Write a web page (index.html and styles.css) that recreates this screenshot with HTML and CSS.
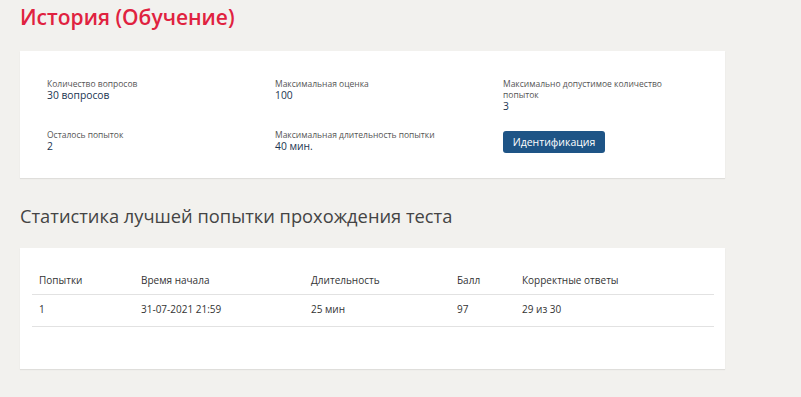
FILE: index.html
```html
<!DOCTYPE html>
<html>

<head>
    <link rel="stylesheet" href="styles.css">
</head>

<body>

    <div class="page">
        <h1 class="page-title">История (Обучение)</h1>

        <div class="card info-card">
            <div class="info-grid">
                <div class="info-item">
                    <div class="info-label">Количество вопросов</div>
                    <div class="info-value">30 вопросов</div>
                </div>
                <div class="info-item">
                    <div class="info-label">Максимальная оценка</div>
                    <div class="info-value">100</div>
                </div>
                <div class="info-item">
                    <div class="info-label">Максимально допустимое количество попыток</div>
                    <div class="info-value">3</div>
                </div>
                <div class="info-item">
                    <div class="info-label">Осталось попыток</div>
                    <div class="info-value">2</div>
                </div>
                <div class="info-item">
                    <div class="info-label">Максимальная длительность попытки</div>
                    <div class="info-value">40 мин.</div>
                </div>
                <div class="info-item">
                    <a href="#" class="btn">Идентификация</a>
                </div>
            </div>
        </div>

        <h2 class="section-title">Статистика лучшей попытки прохождения теста</h2>

        <div class="card table-card">
            <table class="stats-table">
                <thead>
                    <tr>
                        <th class="col-try">Попытки</th>
                        <th class="col-start">Время начала</th>
                        <th class="col-dur">Длительность</th>
                        <th class="col-score">Балл</th>
                        <th>Корректные ответы</th>
                    </tr>
                </thead>
                <tbody>
                    <tr>
                        <td>1</td>
                        <td>31-07-2021 21:59</td>
                        <td>25 мин</td>
                        <td>97</td>
                        <td>29 из 30</td>
                    </tr>
                </tbody>
            </table>
        </div>
    </div>

</body>

</html>
```

FILE: styles.css
```css
body {
    margin: 0;
    background: #f2f1ee;
    font-family: "Open Sans", "Noto Sans", sans-serif;
    color: #333;
}

.page {
    padding: 2px 20px 20px;
    width: 705px;
}

.page-title {
    margin: 0;
    font-size: 21px;
    font-weight: 600;
    line-height: 30px;
    color: #e0223f;
}

.card {
    background: #fff;
    box-shadow: 0 1px 1px rgba(0, 0, 0, 0.08);
}

/* блок с параметрами теста */
.info-card {
    margin-top: 19px;
    padding: 27px 27px 25px;
}

.info-grid {
    display: grid;
    grid-template-columns: 228px 228px 195px;
    row-gap: 17px;
}

.info-label {
    font-size: 8.5px;
    line-height: 11px;
    color: #555;
    padding-right: 20px;
}

.info-value {
    font-size: 10.3px;
    line-height: 12px;
    color: #1b3551;
}

.info-item .btn {
    display: inline-block;
    margin-top: -2px;
    width: 102px;
    height: 22px;
    line-height: 22px;
    text-align: center;
    background: #1e5486;
    color: #fff;
    font-size: 10.5px;
    border-radius: 3px;
    text-decoration: none;
}

.section-title {
    margin: 26px 0 0;
    font-size: 18.3px;
    font-weight: 400;
    line-height: 24px;
    color: #444;
}

/* таблица статистики */
.table-card {
    margin-top: 20px;
    padding: 15px 11px 42px 12px;
}

.stats-table {
    width: 100%;
    border-collapse: collapse;
    font-size: 10px;
    color: #333;
}

.stats-table th,
.stats-table td {
    text-align: left;
    font-weight: 400;
    line-height: 16px;
    padding: 6px 7px 9px;
    border-bottom: 1px solid #e2e2e2;
}

.stats-table thead th {
    padding: 9px 7px 6px;
}

.col-try { width: 88px; }
.col-start { width: 156px; }
.col-dur { width: 132px; }
.col-score { width: 51px; }
```
